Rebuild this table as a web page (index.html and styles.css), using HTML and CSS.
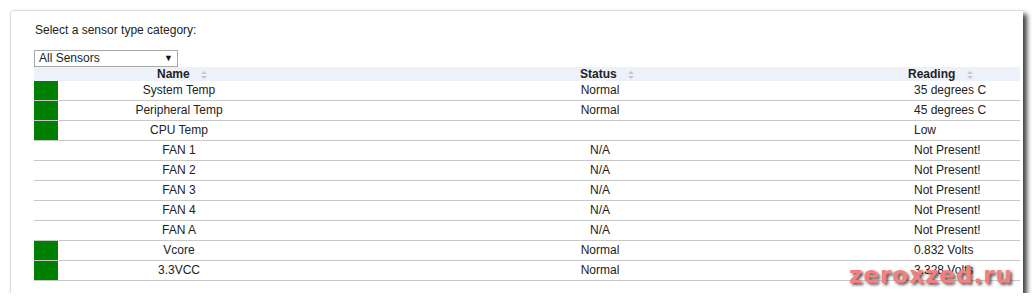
FILE: index.html
```html
<!DOCTYPE html>
<html lang="en">
<head>
    <meta charset="UTF-8">
    <title>Sensor Readings</title>
    <link rel="stylesheet" href="styles.css">
</head>
<body>

    <div class="frame">
        <div class="pick-label">Select a sensor type category:</div>
        <div class="pick">
            <span>All Sensors</span>
            <span class="arrow">&#9660;</span>
        </div>

        <table class="sensors">
            <colgroup>
                <col class="c-state">
                <col class="c-name">
                <col class="c-status">
                <col class="c-reading">
            </colgroup>
            <thead>
                <tr>
                    <th></th>
                    <th class="h-name">Name <svg class="sort" width="6" height="8" viewBox="0 0 6 8"><path d="M3 0L6 3H0z M3 8L0 5H6z" fill="#c4c8cc"/></svg></th>
                    <th class="h-status">Status <svg class="sort" width="6" height="8" viewBox="0 0 6 8"><path d="M3 0L6 3H0z M3 8L0 5H6z" fill="#c4c8cc"/></svg></th>
                    <th class="h-reading">Reading <svg class="sort" width="6" height="8" viewBox="0 0 6 8"><path d="M3 0L6 3H0z M3 8L0 5H6z" fill="#c4c8cc"/></svg></th>
                </tr>
            </thead>
            <tbody>
                <tr><td class="ok"></td><td>System Temp</td><td>Normal</td><td class="val">35 degrees C</td></tr>
                <tr><td class="ok"></td><td>Peripheral Temp</td><td>Normal</td><td class="val">45 degrees C</td></tr>
                <tr><td class="ok"></td><td>CPU Temp</td><td></td><td class="val">Low</td></tr>
                <tr><td></td><td>FAN 1</td><td>N/A</td><td class="val">Not Present!</td></tr>
                <tr><td></td><td>FAN 2</td><td>N/A</td><td class="val">Not Present!</td></tr>
                <tr><td></td><td>FAN 3</td><td>N/A</td><td class="val">Not Present!</td></tr>
                <tr><td></td><td>FAN 4</td><td>N/A</td><td class="val">Not Present!</td></tr>
                <tr><td></td><td>FAN A</td><td>N/A</td><td class="val">Not Present!</td></tr>
                <tr><td class="ok"></td><td>Vcore</td><td>Normal</td><td class="val">0.832 Volts</td></tr>
                <tr><td class="ok"></td><td>3.3VCC</td><td>Normal</td><td class="val">3.328 Volts</td></tr>
            </tbody>
        </table>

        <div class="mark">zeroxzed.ru</div>
    </div>

</body>
</html>
```

FILE: styles.css
```css
body {
    margin: 0;
    background-color: white;
    font-family: "Liberation Sans", Arial, sans-serif;
    font-size: 12px;
    color: #222;
}
.frame {
    position: relative;
    margin: 10px 0 0 10px;
    width: 988px;
    height: 271px;
    padding: 11px 0 0 24px;
    background-color: white;
    border-top: 1px solid #dcdcdc;
    border-left: 1px solid #dcdcdc;
    border-top-left-radius: 4px;
    box-shadow: 4px 4px 5px rgba(0, 0, 0, 0.75);
}
.pick-label {
    line-height: 14px;
    margin-top: 1px;
    margin-bottom: 13px;
}
.pick {
    display: flex;
    justify-content: space-between;
    align-items: center;
    width: 134px;
    height: 15px;
    padding: 0 4px 0 4px;
    border: 1px solid #a9a9a9;
    line-height: 15px;
    margin-left: -1px;
}
.pick .arrow {
    font-size: 9px;
    color: #111;
}
.sensors {
    border-collapse: collapse;
    table-layout: fixed;
    width: 986px;
    margin-left: -1px;
}
.c-state { width: 24px; }
.c-name { width: 242px; }
.c-status { width: 600px; }
.c-reading { width: 120px; }
.sensors th {
    height: 14px;
    padding: 0;
    line-height: 14px;
    background-color: #edf2fa;
    font-weight: bold;
}
.sensors th.h-name { text-align: center; padding-left: 6px; }
.sensors th.h-status { text-align: center; padding-left: 14px; }
.sensors th.h-reading { text-align: left; padding-left: 8px; }
.sort {
    margin-left: 8px;
    vertical-align: -1px;
}
.sensors td {
    height: 19px;
    padding: 0;
    line-height: 19px;
    text-align: center;
    border-bottom: 1px solid #c8c8c8;
}
.sensors td.ok {
    background-color: green;
}
.sensors td.val {
    text-align: left;
    padding-left: 14px;
}
.mark {
    position: absolute;
    left: 838px;
    top: 251px;
    font-family: "DejaVu Sans", sans-serif;
    font-weight: bold;
    font-size: 23px;
    letter-spacing: 1px;
    color: #f47f80;
    text-shadow: 2px 2px 3px rgba(40, 40, 40, 0.8);
}
```
